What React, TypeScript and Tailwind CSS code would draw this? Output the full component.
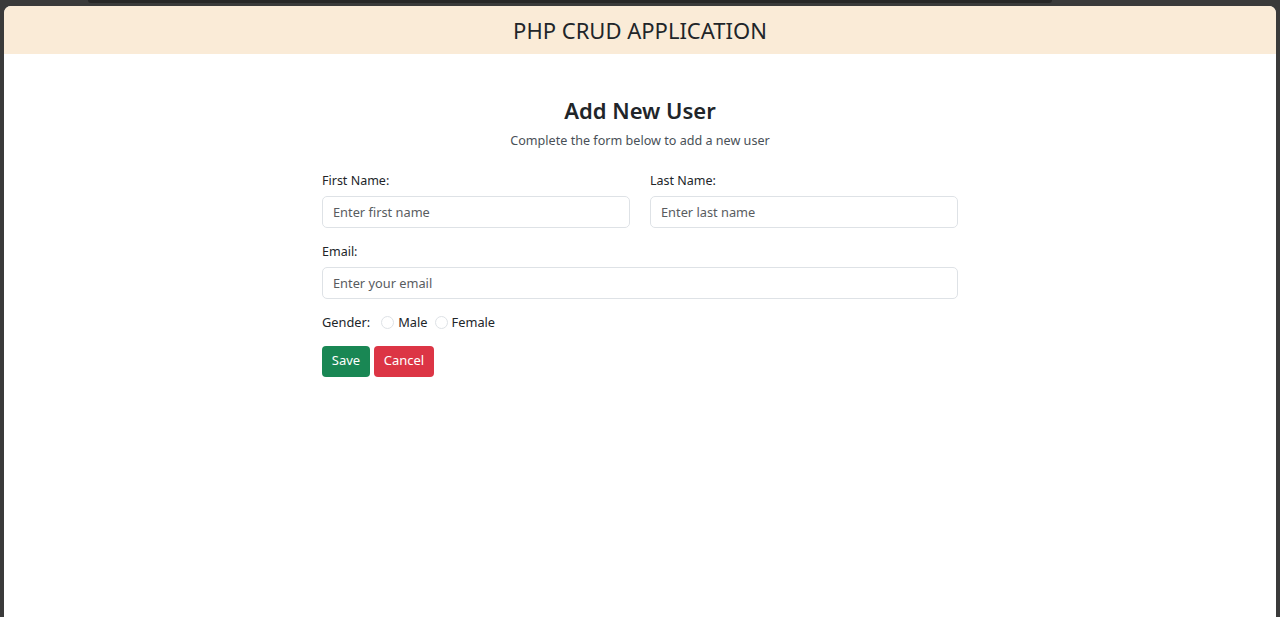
import React from "react";

const font = { fontFamily: '"Noto Sans", "Open Sans", sans-serif' };

const Field = ({ label, placeholder, type = "text" }: { label: string; placeholder: string; type?: string }) => (
  <div className="flex flex-col">
    <label className="text-[12.5px] leading-[21px] text-[#212529]">{label}</label>
    <input
      type={type}
      placeholder={placeholder}
      className="mt-[5px] h-[32px] w-full rounded-[5px] border border-[#dee2e6] bg-white px-[10px] text-[12.8px] text-[#212529] placeholder:text-[#595c5f] outline-none"
    />
  </div>
);

const Radio = ({ label }: { label: string }) => (
  <label className="flex items-center gap-[4px]">
    <span className="h-[13px] w-[13px] rounded-full border border-[#dee2e6] bg-white" />
    <span>{label}</span>
  </label>
);

export default function App() {
  return (
    <div className="flex h-[617px] w-full flex-col bg-[#3a3a3a]" style={font}>
      {/* top tab strip */}
      <div className="flex h-[6px] shrink-0">
        <div className="ml-[88px] h-[3px] w-[964px] rounded-b-[4px] bg-[#272727]" />
      </div>

      <div className="mx-[4px] flex flex-1 flex-col overflow-hidden rounded-t-[7px] bg-white">
        <header className="flex h-[48px] shrink-0 items-center justify-center bg-[#faebd7] pt-[1px]">
          <h1 className="text-[22px] font-normal text-[#212529]">PHP CRUD APPLICATION</h1>
        </header>

        <main className="mx-auto mt-[41.5px] w-[636px]">
          <div className="text-center">
            <h2 className="text-[22px] font-semibold leading-[29px] text-[#212529]">Add New User</h2>
            <p className="mt-[5px] text-[12.6px] leading-[21px] text-[#495057]">
              Complete the form below to add a new user
            </p>
          </div>

          <form className="mt-[19px] flex flex-col">
            <div className="grid grid-cols-2 gap-x-[20px]">
              <Field label="First Name:" placeholder="Enter first name" />
              <Field label="Last Name:" placeholder="Enter last name" />
            </div>

            <div className="mt-[13px]">
              <Field label="Email:" placeholder="Enter your email" type="email" />
            </div>

            <div className="mt-[13px] flex items-center gap-[7px] text-[12.8px] leading-[21px] text-[#212529]">
              <span className="mr-[4px]">Gender:</span>
              <Radio label="Male" />
              <Radio label="Female" />
            </div>

            <div className="mt-[13px] flex gap-[4px]">
              <button type="button" className="h-[31px] w-[48px] rounded-[4px] bg-[#198754] text-[13px] text-white">
                Save
              </button>
              <button type="button" className="h-[31px] w-[60px] rounded-[4px] bg-[#dc3545] text-[13px] text-white">
                Cancel
              </button>
            </div>
          </form>
        </main>
      </div>
    </div>
  );
}
